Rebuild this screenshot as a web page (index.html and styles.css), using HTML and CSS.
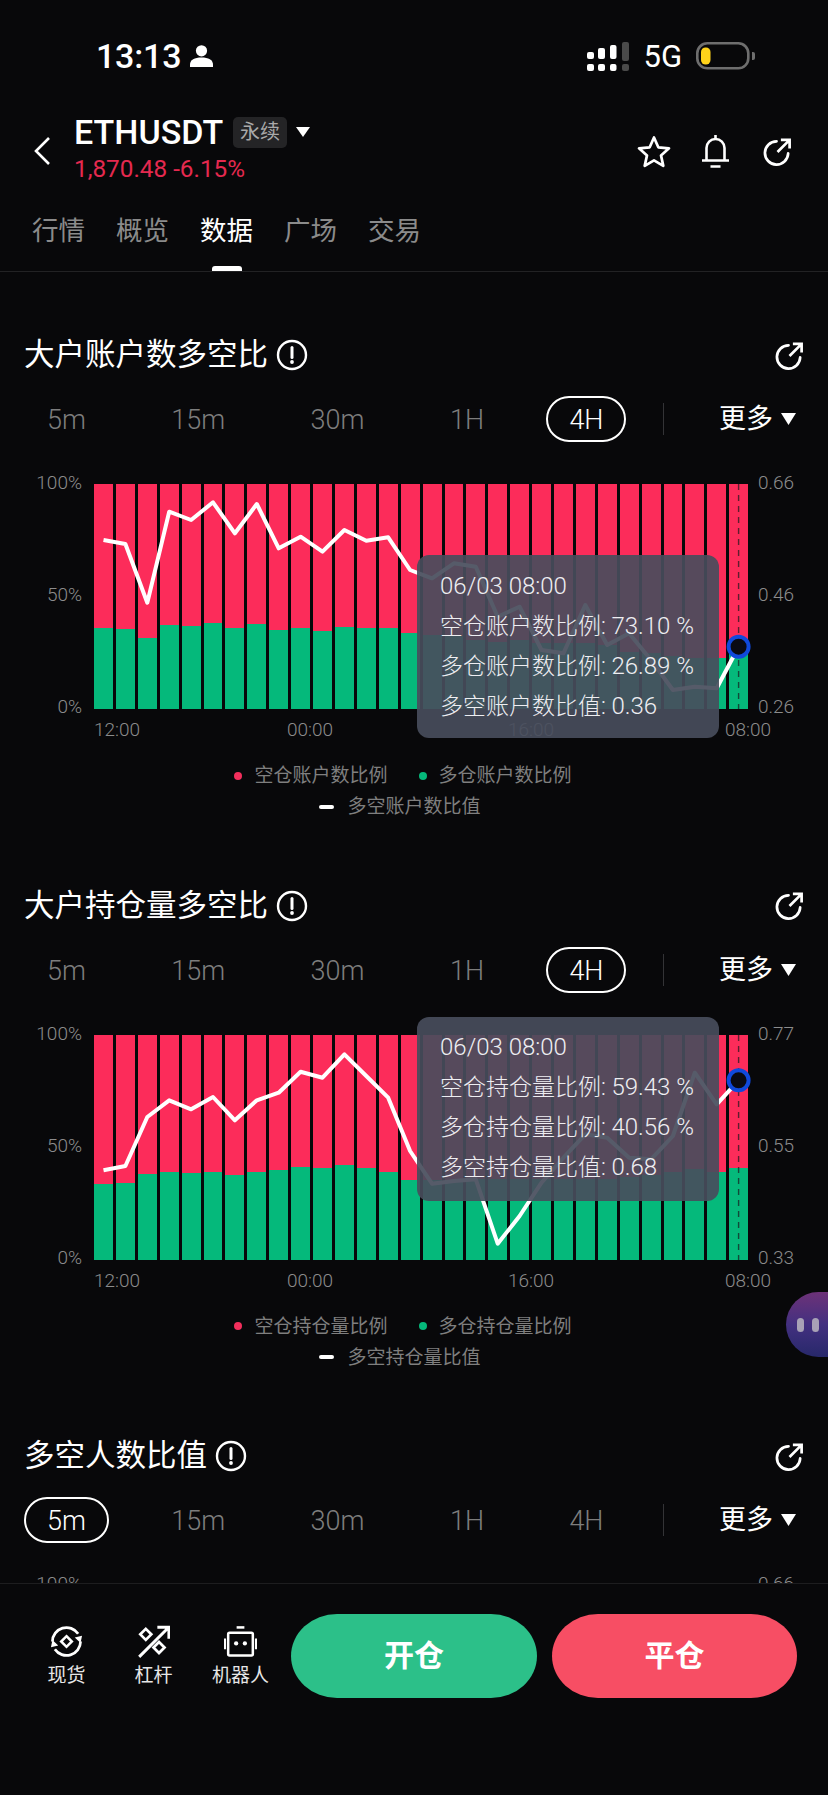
FILE: index.html
```html
<!DOCTYPE html>
<html lang="zh">
<head>
<meta charset="utf-8">
<title>ETHUSDT 数据</title>
<link rel="stylesheet" href="styles.css">
</head>
<body>
<svg class="defs" width="0" height="0">
  <symbol id="share" viewBox="0 0 32 32"><path d="M15 5.500A12 12 0 1 0 27 18" fill="none" stroke="currentColor" stroke-width="2.800" stroke-linecap="round"/><path d="M16 16.500 28 4.500M19.500 4h9v9" fill="none" stroke="currentColor" stroke-width="2.800"/></symbol>
  <symbol id="info" viewBox="0 0 32 32"><circle cx="16" cy="16" r="14" fill="none" stroke="currentColor" stroke-width="2.400"/><path d="M16 8.500v10" stroke="currentColor" stroke-width="3" stroke-linecap="round"/><circle cx="16" cy="23" r="1.900" fill="currentColor"/></symbol>
</svg>
<div class="page">
  <div class="status">
    <span class="clock">13:13</span>
    <svg class="person" viewBox="0 0 23 22"><circle cx="11.500" cy="5.800" r="5.600" fill="#fff"/><path d="M0 22v-2.500c0-4.500 4.500-7 11.500-7s11.500 2.500 11.500 7V22z" fill="#fff"/></svg>
    <svg class="signal" viewBox="0 0 42 29"><g fill="#fff"><rect x="0" y="10" width="7" height="7" rx="2"/><rect x="11" y="6" width="7" height="11" rx="2"/><rect x="23" y="3" width="6.500" height="14" rx="2"/><rect x="0" y="22" width="7" height="7" rx="2"/><rect x="11" y="22" width="7" height="7" rx="2"/><rect x="23" y="22" width="6.500" height="7" rx="2"/></g><g fill="#4a4a4a"><rect x="35" y="0" width="7" height="19" rx="2"/><rect x="35" y="22" width="7" height="7" rx="2"/></g></svg>
    <span class="net">5G</span>
    <svg class="battery" viewBox="0 0 59 28"><rect x="1.300" y="1.300" width="51" height="25" rx="10" fill="none" stroke="#6e6e6e" stroke-width="2.600"/><rect x="5" y="5.500" width="9.500" height="17" rx="4.500" fill="#ffd31a"/><path d="M56 10h1a2 2 0 0 1 2 2v4a2 2 0 0 1-2 2h-1z" fill="#6e6e6e"/></svg>
  </div>

  <header class="head">
    <svg class="back" viewBox="0 0 16 28"><path d="M15 1 2 14l13 13" fill="none" stroke="#fff" stroke-width="2.600"/></svg>
    <div class="symbol">
      <div class="symbol-row">
        <span class="pair">ETHUSDT</span>
        <span class="badge">永续</span>
        <svg class="tri" viewBox="0 0 14 10"><path d="M0 0h14L7 10z" fill="#fff"/></svg>
      </div>
      <div class="price">1,870.48 -6.15%</div>
    </div>
    <div class="head-icons">
      <svg class="star" viewBox="0 0 34 33"><path d="M17 2.500l4.300 9.800 10.700 1-8 7.100 2.300 10.500-9.300-5.500-9.300 5.500L10 20.400l-8-7.100 10.700-1z" fill="none" stroke="#fff" stroke-width="2.700" stroke-linejoin="round"/></svg>
      <svg class="bell" viewBox="0 0 27 33"><path d="M13.500 0v3M4.500 25V13a9 9 0 0 1 18 0v12M0 25.500h27M8.500 31.500h10" fill="none" stroke="#fff" stroke-width="2.600"/></svg>
      <svg class="share"><use href="#share"/></svg>
    </div>
  </header>

  <nav class="nav">
    <span>行情</span><span>概览</span><span class="on">数据</span><span>广场</span><span>交易</span>
  </nav>

  <main class="scroll">
    <section class="sec">
      <div class="sec-title"><h2>大户账户数多空比</h2><svg class="info"><use href="#info"/></svg><svg class="sec-share"><use href="#share"/></svg></div>
      <div class="ranges"><span>5m</span><span>15m</span><span>30m</span><span>1H</span><span class="on">4H</span><i class="sep"></i><span class="more">更多<svg class="tri-more" viewBox="0 0 15 12"><path d="M0 0h15L7.500 12z" fill="#fff"/></svg></span></div>
      <div class="chart">
        <div class="axis"><span>100%</span><span>50%</span><span>0%</span></div>
        <div class="plot">
          <div class="bar"><b style="height:35.9%"></b></div><div class="bar"><b style="height:35.4%"></b></div><div class="bar"><b style="height:31.4%"></b></div><div class="bar"><b style="height:37.3%"></b></div><div class="bar"><b style="height:36.9%"></b></div><div class="bar"><b style="height:38.1%"></b></div><div class="bar"><b style="height:35.8%"></b></div><div class="bar"><b style="height:37.9%"></b></div><div class="bar"><b style="height:34.9%"></b></div><div class="bar"><b style="height:35.9%"></b></div><div class="bar"><b style="height:34.8%"></b></div><div class="bar"><b style="height:36.6%"></b></div><div class="bar"><b style="height:35.9%"></b></div><div class="bar"><b style="height:35.9%"></b></div><div class="bar"><b style="height:33.6%"></b></div><div class="bar"><b style="height:32.9%"></b></div><div class="bar"><b style="height:32.4%"></b></div><div class="bar"><b style="height:30.7%"></b></div><div class="bar"><b style="height:29.9%"></b></div><div class="bar"><b style="height:30.7%"></b></div><div class="bar"><b style="height:29.2%"></b></div><div class="bar"><b style="height:29.2%"></b></div><div class="bar"><b style="height:29.2%"></b></div><div class="bar"><b style="height:28.4%"></b></div><div class="bar"><b style="height:25.4%"></b></div><div class="bar"><b style="height:24.9%"></b></div><div class="bar"><b style="height:23.4%"></b></div><div class="bar"><b style="height:22.5%"></b></div><div class="bar"><b style="height:22.5%"></b></div><div class="bar"><b style="height:26.89%"></b></div>
          <svg class="line" viewBox="0 0 654 225">
            <path class="cursor" d="M644.6 0V225"/>
            <polyline points="9.500,56 31.400,60 53.300,118.700 75.200,27.700 97.100,36 119,18.300 140.900,49.300 162.800,20 184.700,64.300 206.600,52.700 228.500,67.700 250.400,46 272.300,56.700 294.200,53.300 316.100,86 338,94.300 359.900,79.300 381.800,82.700 403.700,132.700 425.600,122.700 447.500,166 469.400,169.300 491.300,121 513.200,161 535.100,149.300 557,176 578.900,206 600.800,202.700 622.700,204.300 644.600,162.700"/>
            <circle cx="644.600" cy="162.700" r="10"/>
          </svg>
          <div class="tip tip-a">
            <p class="when">06/03 08:00</p><p>空仓账户数比例: <em>73.10 %</em></p><p>多仓账户数比例: <em>26.89 %</em></p><p>多空账户数比值: <em>0.36</em></p>
          </div>
        </div>
        <div class="axis"><span>0.66</span><span>0.46</span><span>0.26</span></div>
        <div class="times"><span>12:00</span><span>00:00</span><span>16:00</span><span>08:00</span></div>
      </div>
      <div class="legend"><span class="k"><i class="dot red"></i>空仓账户数比例</span><span class="k"><i class="dot green"></i>多仓账户数比例</span><span class="k"><i class="dash"></i>多空账户数比值</span></div>
    </section>

    <section class="sec">
      <div class="sec-title"><h2>大户持仓量多空比</h2><svg class="info"><use href="#info"/></svg><svg class="sec-share"><use href="#share"/></svg></div>
      <div class="ranges"><span>5m</span><span>15m</span><span>30m</span><span>1H</span><span class="on">4H</span><i class="sep"></i><span class="more">更多<svg class="tri-more" viewBox="0 0 15 12"><path d="M0 0h15L7.500 12z" fill="#fff"/></svg></span></div>
      <div class="chart">
        <div class="axis"><span>100%</span><span>50%</span><span>0%</span></div>
        <div class="plot">
          <div class="bar"><b style="height:33.5%"></b></div><div class="bar"><b style="height:33.8%"></b></div><div class="bar"><b style="height:37.9%"></b></div><div class="bar"><b style="height:39%"></b></div><div class="bar"><b style="height:38.5%"></b></div><div class="bar"><b style="height:39%"></b></div><div class="bar"><b style="height:37.5%"></b></div><div class="bar"><b style="height:38.8%"></b></div><div class="bar"><b style="height:39.6%"></b></div><div class="bar"><b style="height:40.9%"></b></div><div class="bar"><b style="height:40.6%"></b></div><div class="bar"><b style="height:42.2%"></b></div><div class="bar"><b style="height:40.7%"></b></div><div class="bar"><b style="height:39.1%"></b></div><div class="bar"><b style="height:35.3%"></b></div><div class="bar"><b style="height:35.3%"></b></div><div class="bar"><b style="height:35.3%"></b></div><div class="bar"><b style="height:35.6%"></b></div><div class="bar"><b style="height:36%"></b></div><div class="bar"><b style="height:35.6%"></b></div><div class="bar"><b style="height:36%"></b></div><div class="bar"><b style="height:36%"></b></div><div class="bar"><b style="height:36%"></b></div><div class="bar"><b style="height:36%"></b></div><div class="bar"><b style="height:36.7%"></b></div><div class="bar"><b style="height:37.5%"></b></div><div class="bar"><b style="height:39%"></b></div><div class="bar"><b style="height:40.4%"></b></div><div class="bar"><b style="height:39%"></b></div><div class="bar"><b style="height:40.56%"></b></div>
          <svg class="line" viewBox="0 0 654 225">
            <path class="cursor" d="M644.6 0V225"/>
            <polyline points="9.500,135.300 31.400,131 53.300,82 75.200,65.300 97.100,74.300 119,62 140.900,85.300 162.800,65.300 184.700,57.700 206.600,36.700 228.500,42.700 250.400,19.300 272.300,41 294.200,62.700 316.100,116 338,148.700 359.900,146 381.800,144.300 403.700,208.700 425.600,181 447.500,147.700 469.400,122.700 491.300,99.300 513.200,102.700 535.100,122.700 557,124.300 578.900,101 600.800,37.700 622.700,69.300 644.600,45.300"/>
            <circle cx="644.600" cy="45.300" r="10"/>
          </svg>
          <div class="tip tip-b">
            <p class="when">06/03 08:00</p><p>空仓持仓量比例: <em>59.43 %</em></p><p>多仓持仓量比例: <em>40.56 %</em></p><p>多空持仓量比值: <em>0.68</em></p>
          </div>
        </div>
        <div class="axis"><span>0.77</span><span>0.55</span><span>0.33</span></div>
        <div class="times"><span>12:00</span><span>00:00</span><span>16:00</span><span>08:00</span></div>
      </div>
      <div class="legend"><span class="k"><i class="dot red"></i>空仓持仓量比例</span><span class="k"><i class="dot green"></i>多仓持仓量比例</span><span class="k"><i class="dash"></i>多空持仓量比值</span></div>
    </section>

    <section class="sec">
      <div class="sec-title"><h2>多空人数比值</h2><svg class="info"><use href="#info"/></svg><svg class="sec-share"><use href="#share"/></svg></div>
      <div class="ranges"><span class="on">5m</span><span>15m</span><span>30m</span><span>1H</span><span>4H</span><i class="sep"></i><span class="more">更多<svg class="tri-more" viewBox="0 0 15 12"><path d="M0 0h15L7.500 12z" fill="#fff"/></svg></span></div>
      <div class="chart">
        <div class="axis"><span>100%</span><span>50%</span><span>0%</span></div>
        <div class="plot"></div>
        <div class="axis"><span>0.66</span><span>0.46</span><span>0.26</span></div>
      </div>
    </section>
  </main>

  <footer class="foot">
    <div class="tools">
      <div class="tool">
        <svg class="tool-ico" viewBox="0 0 34 34"><path d="M2.500 17A14.500 14.500 0 0 1 29 9M31.500 17A14.500 14.500 0 0 1 5 25" fill="none" stroke="#fff" stroke-width="2.800"/><path d="M33 11l-1.500 7.500-6-5.500zM1 23l1.500-7.500 6 5.500z" fill="#fff"/><path d="M17 11.500l5.500 5.500-5.500 5.500-5.500-5.500z" fill="none" stroke="#fff" stroke-width="2.600"/></svg>
        <span>现货</span>
      </div>
      <div class="tool">
        <svg class="tool-ico" viewBox="0 0 30 30"><path d="M2 29 28 3M18.500 2h10.500v10.500" fill="none" stroke="#fff" stroke-width="2.700"/><path d="M8 3.500l5 5-5 5-5-5zM20 15.500l5 5-5 5-5-5z" fill="none" stroke="#fff" stroke-width="2.500"/></svg>
        <span>杠杆</span>
      </div>
      <div class="tool">
        <svg class="tool-ico" viewBox="0 0 34 32"><path d="M13 1.500h8" stroke="#fff" stroke-width="2.600"/><rect x="4.300" y="7" width="25.400" height="23.500" rx="1.500" fill="none" stroke="#fff" stroke-width="2.600"/><path d="M1 13v11M33 13v11" stroke="#fff" stroke-width="2.200"/><circle cx="12.500" cy="18" r="2.200" fill="#fff"/><circle cx="21.500" cy="18" r="2.200" fill="#fff"/></svg>
        <span>机器人</span>
      </div>
    </div>
    <div class="btn open">开仓</div>
    <div class="btn close">平仓</div>
  </footer>

  <div class="assist"><i></i><i></i></div>
</div>
</body>
</html>
```

FILE: styles.css
```css
* { box-sizing: border-box; }
html, body { margin: 0; padding: 0; background: #08080a; }
body {
  color: #fff;
  font-family: Roboto, "Noto Sans CJK SC", "Liberation Sans", sans-serif;
}
.defs { position: absolute; }
.page {
  position: relative;
  width: 828px;
  height: 1795px;
  overflow: hidden;
  display: flex;
  flex-direction: column;
}

/* status bar */
.status {
  height: 112px;
  flex: none;
  display: flex;
  align-items: center;
  padding: 0 73px 0 96px;
}
.clock { font-size: 34px; font-weight: 500; letter-spacing: -0.2px; }
.person { width: 23px; height: 22px; margin-left: 9px; }
.signal { width: 42px; height: 29px; margin-left: auto; }
.net { font-size: 31px; margin-left: 14px; }
.battery { width: 59px; height: 28px; margin-left: 14px; }

/* header */
.head {
  height: 72px;
  flex: none;
  display: flex;
  align-items: center;
  padding: 0 35px 0 34px;
}
.back { width: 16px; height: 28px; margin: 6px 24px 0 0; }
.symbol-row { height: 38px; padding-top: 2px; display: flex; align-items: center; }
.pair { width: 150px; font-size: 34px; font-weight: 500; white-space: nowrap; }
.badge {
  width: 54px;
  height: 31px;
  margin-left: 9px;
  border-radius: 5px;
  background: #242426;
  color: #a9a9a9;
  font-size: 20px;
  line-height: 31px;
  text-align: center;
}
.tri { width: 14px; height: 10px; margin-left: 9px; }
.price { height: 34px; font-size: 24.3px; line-height: 38px; color: #e5294f; }
.head-icons { margin-left: auto; margin-top: 6px; display: flex; align-items: center; }
.star { width: 34px; height: 33px; }
.bell { width: 27px; height: 33px; margin-left: 31px; }
.share { width: 31px; height: 31px; margin-left: 33px; }

/* top nav */
.nav {
  position: relative;
  height: 88px;
  flex: none;
  display: flex;
  gap: 31px;
  padding: 29px 0 0 32px;
  border-bottom: 1px solid #222224;
  font-size: 26.5px;
  line-height: 36px;
  color: #8b8b8b;
}
.nav span { position: relative; height: 36px; }
.nav .on { color: #fff; }
.nav .on::after {
  content: "";
  position: absolute;
  left: 12px;
  top: 53px;
  width: 30px;
  height: 5px;
  border-radius: 3px 3px 0 0;
  background: #fff;
}

/* scrolling content */
.scroll { flex: 1; min-height: 0; overflow: hidden; padding-top: 62px; }
.sec { height: 550.5px; padding: 0 24px; }
.sec-title { height: 42px; display: flex; align-items: center; }
.sec-title h2 { margin: 0; font-size: 30.5px; font-weight: 400; line-height: 42px; }
.info { width: 32px; height: 32px; margin-left: 8px; }
.sec-share { width: 31px; height: 31px; margin-left: auto; margin-right: -1px; }

.ranges {
  height: 46px;
  margin-top: 20px;
  display: flex;
  align-items: center;
  gap: 39.4px;
  font-size: 27px;
  font-weight: 300;
  color: #7d7d7d;
}
.ranges span {
  height: 46px;
  padding: 0 21px;
  line-height: 44px;
  border: 2px solid transparent;
  border-radius: 23px;
}
.ranges .on { color: #fff; border-color: #fff; }
.sep { width: 1px; height: 32px; margin-left: -3px; background: #333336; }
.ranges .more {
  margin-left: auto;
  padding: 0;
  display: flex;
  align-items: center;
  gap: 8px;
  color: #fff;
  font-weight: 400;
  margin-right: 6px;
}
.tri-more { width: 15px; height: 12px; }

.chart {
  margin-top: 42px;
  display: grid;
  grid-template-columns: 58px 654px 1fr;
  grid-template-rows: 225px auto;
  column-gap: 12px;
}
.axis {
  margin: -13px 0 -10px;
  display: flex;
  flex-direction: column;
  justify-content: space-between;
  font-size: 19px;
  font-weight: 300;
  line-height: 24px;
  color: #8c8c8c;
  text-align: right;
}
.axis:nth-child(3) { margin-left: -2px; text-align: left; }
.plot { position: relative; display: flex; gap: 3px; }
.bar {
  flex: 1;
  display: flex;
  align-items: flex-end;
  background: #fc2c5a;
}
.bar b { display: block; width: 100%; background: #05b97b; }
.line { position: absolute; left: 0; top: 0; width: 654px; height: 225px; overflow: visible; }
.line polyline { fill: none; stroke: #fff; stroke-width: 4; stroke-linejoin: round; }
.line circle { fill: #0a0a14; stroke: #1049dc; stroke-width: 4; }
.cursor { stroke: #1a1a1e; stroke-width: 1.4; stroke-dasharray: 6 5; opacity: 0.7; }

.tip {
  position: absolute;
  z-index: 2;
  left: 323px;
  width: 302px;
  padding: 11px 0 0 23px;
  border-radius: 12px;
  background: rgba(72, 77, 92, 0.92);
  font-size: 23px;
  font-weight: 300;
  line-height: 40px;
  color: #eeeef2;
}
.tip p { margin: 0; height: 40px; white-space: nowrap; }
.tip em { font-size: 24px; font-style: normal; }
.tip .when { font-size: 24px; }
.tip-a { top: 71px; height: 183px; }
.tip-b { top: -18px; height: 184px; padding-top: 10px; }

.times {
  grid-column: 2 / 4;
  margin-top: 9px;
  display: grid;
  grid-template-columns: 193px 221px 217px auto;
  font-size: 19px;
  font-weight: 300;
  line-height: 24px;
  color: #8c8c8c;
}
.legend {
  margin-top: 18px;
  padding: 0 226px 0 204px;
  display: flex;
  flex-wrap: wrap;
  justify-content: center;
  column-gap: 31px;
  font-size: 19px;
  line-height: 31px;
  color: #7f7f7f;
}
.k { display: flex; align-items: center; white-space: nowrap; }
.k:last-child { margin-right: 6px; }
.dot { width: 8px; height: 8px; margin-right: 12px; border-radius: 50%; }
.red { background: #f22f5c; }
.green { background: #05b97b; }
.dash { width: 15px; height: 4px; margin-right: 13px; border-radius: 2px; background: #fff; }

/* bottom bar */
.foot {
  height: 212px;
  flex: none;
  display: flex;
  align-items: flex-start;
  padding: 30px 0 0 23px;
  border-top: 1px solid #1d1d1f;
  background: #08080a;
}
.tools { display: flex; width: 268px; }
.tool {
  width: 87px;
  padding-top: 11px;
  display: flex;
  flex-direction: column;
  align-items: center;
  font-size: 19px;
  line-height: 24px;
  color: #e6e6e6;
}
.tool-ico { width: 33px; height: 33px; margin-bottom: 6px; }
.btn {
  height: 84px;
  border-radius: 46px / 42px;
  font-size: 30px;
  font-weight: 700;
  line-height: 84px;
  text-align: center;
  color: #fff;
}
.open { width: 246px; background: #2cc089; }
.close { width: 245px; margin-left: 15px; background: #f74e64; }

/* floating assistant */
.assist {
  position: absolute;
  right: 0;
  top: 1292px;
  width: 42px;
  height: 65px;
  padding-left: 11px;
  display: flex;
  align-items: center;
  gap: 8px;
  border-radius: 33px 0 0 33px;
  background: linear-gradient(180deg, #6d3278 0%, #433080 50%, #27286a 100%);
}
.assist i { width: 7px; height: 14px; border-radius: 4px; background: #a8a2b6; }
```
